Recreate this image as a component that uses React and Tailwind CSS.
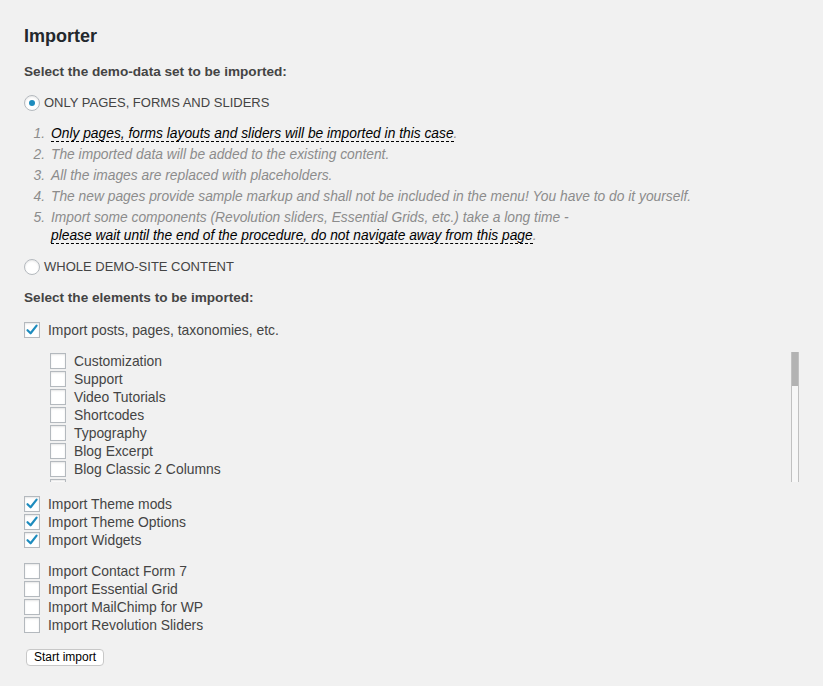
import { useState } from 'react';

const subItems = [
  'Customization',
  'Support',
  'Video Tutorials',
  'Shortcodes',
  'Typography',
  'Blog Excerpt',
  'Blog Classic 2 Columns',
];

function Checkbox({ checked }) {
  return (
    <span className="w-4 h-4 shrink-0 bg-white border border-[#b4b9be] shadow-[inset_0_1px_2px_rgba(0,0,0,0.1)] flex items-center justify-center">
      {checked && (
        <svg width="14" height="14" viewBox="0 0 14 14">
          <path d="M2.5 7.2 L5.6 10.3 L11.6 2.6" fill="none" stroke="#1e8cbe" strokeWidth="2.2" strokeLinecap="round" strokeLinejoin="round" />
        </svg>
      )}
    </span>
  );
}

function Radio({ checked, label }) {
  return (
    <div className="flex items-center h-5 gap-1">
      <span className="w-4 h-4 rounded-full bg-white border border-[#b4b9be] shadow-[inset_0_1px_2px_rgba(0,0,0,0.1)] flex items-center justify-center">
        {checked && <span className="w-[6px] h-[6px] rounded-full bg-[#1e8cbe]" />}
      </span>
      <span className="text-[13px] text-[#444]">{label}</span>
    </div>
  );
}

function CheckRow({ checked, label }) {
  return (
    <div className="flex items-center h-[18px] gap-2">
      <Checkbox checked={checked} />
      <span className="text-[13.9px] text-[#444] leading-[18px]">{label}</span>
    </div>
  );
}

export default function App() {
  const [mode] = useState('pages');

  return (
    <div className="min-h-[686px] bg-[#f1f1f1] px-6 pt-6 font-['Liberation_Sans',Arial,sans-serif]">
      <h2 className="text-[18px] leading-6 font-semibold text-[#23282d]">Importer</h2>

      <p className="mt-[14px] text-[13.6px] leading-5 font-bold text-[#444]">Select the demo-data set to be imported:</p>

      <div className="mt-[11px]">
        <Radio checked={mode === 'pages'} label="ONLY PAGES, FORMS AND SLIDERS" />
      </div>

      <ol className="mt-3 italic text-[13.8px] leading-[18px] text-[#8c8c8c]">
        <li className="flex mb-[3px]">
          <span className="w-[27px] text-right pr-[6px]">1.</span>
          <span><span className="text-black border-b border-dashed border-black">Only pages, forms layouts and sliders will be imported in this case</span>.</span>
        </li>
        <li className="flex mb-[3px]">
          <span className="w-[27px] text-right pr-[6px]">2.</span>
          <span>The imported data will be added to the existing content.</span>
        </li>
        <li className="flex mb-[3px]">
          <span className="w-[27px] text-right pr-[6px]">3.</span>
          <span>All the images are replaced with placeholders.</span>
        </li>
        <li className="flex mb-[3px]">
          <span className="w-[27px] text-right pr-[6px]">4.</span>
          <span>The new pages provide sample markup and shall not be included in the menu! You have to do it yourself.</span>
        </li>
        <li className="flex">
          <span className="w-[27px] text-right pr-[6px]">5.</span>
          <span>
            Import some components (Revolution sliders, Essential Grids, etc.) take a long time -
            <br />
            <span className="text-black border-b border-dashed border-black">please wait until the end of the procedure, do not navigate away from this page</span>.
          </span>
        </li>
      </ol>

      <div className="mt-3">
        <Radio checked={mode === 'whole'} label="WHOLE DEMO-SITE CONTENT" />
      </div>

      <p className="mt-[11px] text-[13.6px] leading-5 font-bold text-[#444]">Select the elements to be imported:</p>

      <div className="mt-3 flex items-center h-5 gap-2">
        <Checkbox checked />
        <span className="text-[13.9px] text-[#444]">Import posts, pages, taxonomies, etc.</span>
      </div>

      <div className="mt-3 ml-[26px] flex h-[130px] w-[749px]">
        <div className="flex-1 overflow-hidden">
          {subItems.map((item) => (
            <CheckRow key={item} label={item} />
          ))}
          <div className="flex items-center h-[18px]">
            <Checkbox />
          </div>
        </div>
        <div className="w-2 h-full bg-[#f7f7f7] border-x border-[#c1c1c1] flex flex-col">
          <div className="h-[34px] bg-[#b3b3b3]" />
        </div>
      </div>

      <div className="mt-[13px]">
        <CheckRow checked label="Import Theme mods" />
        <CheckRow checked label="Import Theme Options" />
        <CheckRow checked label="Import Widgets" />
      </div>

      <div className="mt-[13px]">
        <CheckRow label="Import Contact Form 7" />
        <CheckRow label="Import Essential Grid" />
        <CheckRow label="Import MailChimp for WP" />
        <CheckRow label="Import Revolution Sliders" />
      </div>

      <button className="mt-[15px] ml-[2px] h-[17px] px-[7px] bg-white border border-[#c8c8c8] rounded-[4px] text-[12px] leading-[15px] text-black">
        Start import
      </button>
    </div>
  );
}
